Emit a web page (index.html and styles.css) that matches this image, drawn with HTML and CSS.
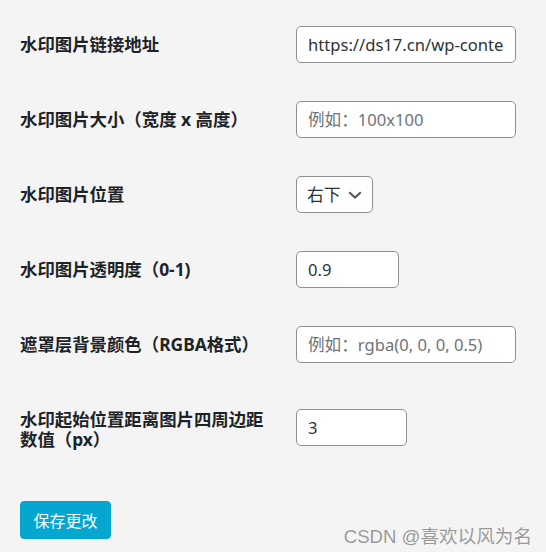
FILE: index.html
```html
<!DOCTYPE html>
<html lang="zh-CN">
<head>
<meta charset="utf-8">
<title>水印设置</title>
<link rel="stylesheet" href="styles.css">
</head>
<body>
<div class="wrap">
  <form class="settings">
    <table class="form-table">
      <tbody>
        <tr>
          <th scope="row">水印图片链接地址</th>
          <td><input class="field wide" type="text" value="https://ds17.cn/wp-content/uploads/watermark.png"></td>
        </tr>
        <tr>
          <th scope="row">水印图片大小（宽度 x 高度）</th>
          <td><input class="field wide" type="text" placeholder="例如：100x100"></td>
        </tr>
        <tr>
          <th scope="row">水印图片位置</th>
          <td>
            <span class="select-wrap">
              <select class="select">
                <option>右下</option>
                <option>左下</option>
                <option>左上</option>
                <option>右上</option>
              </select>
              <svg class="chev" width="14" height="8" viewBox="0 0 14 8" aria-hidden="true"><path d="M1.2 1.2 L7 6.6 L12.8 1.2" fill="none" stroke="#50575e" stroke-width="2"/></svg>
            </span>
          </td>
        </tr>
        <tr>
          <th scope="row">水印图片透明度（0-1)</th>
          <td><input class="field small" type="text" value="0.9"></td>
        </tr>
        <tr>
          <th scope="row">遮罩层背景颜色（RGBA格式）</th>
          <td><input class="field wide" type="text" placeholder="例如：rgba(0, 0, 0, 0.5)"></td>
        </tr>
        <tr class="tall">
          <th scope="row">水印起始位置距离图片四周边距数值（px）</th>
          <td><input class="field num" type="text" value="3"></td>
        </tr>
      </tbody>
    </table>
    <p class="submit"><button type="button" class="button-primary">保存更改</button></p>
  </form>
  <div class="watermark">CSDN @喜欢以风为名</div>
</div>
</body>
</html>
```

FILE: styles.css
```css
html, body {
  margin: 0;
  padding: 0;
  background: #f4f4f4;
}

body {
  font-family: "Noto Sans", "Noto Sans CJK SC", sans-serif;
  color: #1d2327;
}

.wrap {
  position: relative;
  width: 546px;
  height: 552px;
  box-sizing: border-box;
  padding: 7px 0 0 20px;
}

.form-table {
  border-collapse: collapse;
  border-spacing: 0;
}

.form-table th {
  width: 252px;
  padding: 27px 12px 24px 0;
  text-align: left;
  vertical-align: top;
  font-size: 17.4px;
  line-height: 20px;
  font-weight: 700;
  color: #1d2327;
}

.form-table td {
  padding: 19px 0 19px 12px;
  vertical-align: middle;
}

.field {
  display: block;
  box-sizing: border-box;
  height: 37px;
  margin: 0;
  padding: 0 11px;
  border: 1px solid #8c8f94;
  border-radius: 5px;
  background: #fff;
  font-family: "Noto Sans", "Noto Sans CJK SC", sans-serif;
  font-size: 16.6px;
  color: #2c3338;
  outline: none;
}

.field::placeholder {
  color: #6f7378;
}

.wide { width: 220px; }
.small { width: 103px; }
.num { width: 111px; }

.select-wrap {
  position: relative;
  display: inline-block;
  vertical-align: middle;
}

.select {
  display: block;
  box-sizing: border-box;
  width: 77px;
  height: 37px;
  margin: 0;
  padding: 0 28px 0 10px;
  border: 1px solid #8c8f94;
  border-radius: 5px;
  background: #fff;
  font-family: "Noto Sans", "Noto Sans CJK SC", sans-serif;
  font-size: 16.8px;
  color: #2c3338;
  -webkit-appearance: none;
  appearance: none;
  outline: none;
}

.chev {
  position: absolute;
  left: 52px;
  top: 15px;
  pointer-events: none;
}

.submit {
  margin: 28px 0 0;
  padding: 0;
}

.button-primary {
  box-sizing: border-box;
  height: 38px;
  width: 91px;
  padding: 0;
  border: 1px solid #03a3cc;
  border-radius: 4px;
  background: #05a6d0;
  color: #fff;
  font-family: "Noto Sans CJK SC", sans-serif;
  font-size: 16px;
  line-height: 36px;
}

.watermark {
  position: absolute;
  right: 14px;
  bottom: 5px;
  font-family: "Liberation Sans", "Noto Sans CJK SC", sans-serif;
  font-size: 18.6px;
  line-height: 21px;
  color: #9a9a9a;
  text-shadow: 0 0 1px rgba(255,255,255,0.9);
}
```
